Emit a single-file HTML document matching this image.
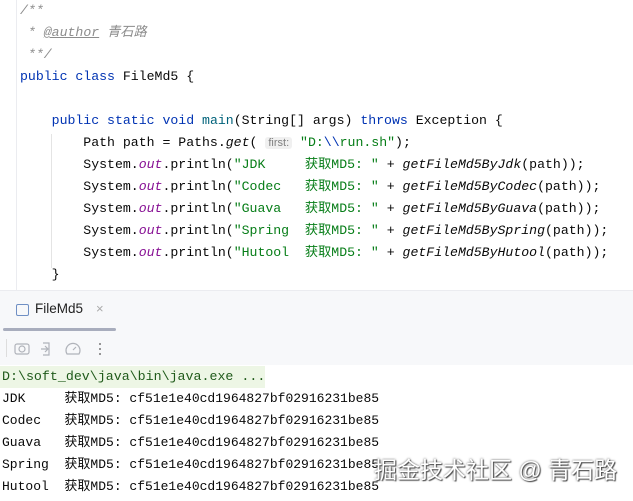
<!DOCTYPE html>
<html><head><meta charset="utf-8"><style>
body{margin:0;width:633px;height:501px;overflow:hidden;background:#fff;font-family:"Liberation Mono","Noto Sans CJK SC",monospace;}
.ed{position:absolute;left:0;top:0;width:633px;height:290px;background:#fff;}
.gl{position:absolute;left:16px;top:0;width:1px;height:290px;background:#ebecf0;}
.ig{position:absolute;left:51px;top:134px;width:1px;height:134px;background:#e4e4e4;}
.ln{position:absolute;left:20px;font-size:13.2px;line-height:22px;white-space:pre;color:#080808;}
.c{color:#8c8c8c;font-style:italic}
.k{color:#0033b3}
.s{color:#067d17}
.f{color:#871094;font-style:italic}
.i{font-style:italic}
.m{color:#00627a}
.hint{font-family:"Liberation Sans",sans-serif;font-size:11px;color:#808080;background:#f0f0f0;border-radius:3px;padding:0 3px;font-style:normal}
.cj{font-family:"Liberation Mono","Noto Sans CJK SC",monospace}
.tabs{position:absolute;left:0;top:290px;width:633px;height:41px;background:#f7f8fa;border-top:1px solid #ebecf0;border-bottom:1px solid #ebecf0;}
.tb{position:absolute;left:0;top:331px;width:633px;height:34px;background:#f7f8fa;}
.con{position:absolute;left:2px;font-size:13px;line-height:22px;white-space:pre;color:#080808}
</style></head><body>
<div class="ed">
<div class="gl"></div><div class="ig"></div>
<div class="ln c" style="top:0px">/**</div>
<div class="ln c" style="top:22px"> * <u>@author</u> <span class="cj">青石路</span></div>
<div class="ln c" style="top:44px"> **/</div>
<div class="ln" style="top:66px"><span class="k">public class</span> FileMd5 {</div>
<div class="ln" style="top:110px">    <span class="k">public static void</span> <span class="m">main</span>(String[] args) <span class="k">throws</span> Exception {</div>
<div class="ln" style="top:132px">        Path path = Paths.<span class="i">get</span>( <span class="hint">first:</span> <span class="s">"D:<span class="k">\\</span>run.sh"</span>);</div>
<div class="ln" style="top:154px">        System.<span class="f">out</span>.println(<span class="s">"JDK     获取MD5: "</span> + <span class="i">getFileMd5ByJdk</span>(path));</div>
<div class="ln" style="top:176px">        System.<span class="f">out</span>.println(<span class="s">"Codec   获取MD5: "</span> + <span class="i">getFileMd5ByCodec</span>(path));</div>
<div class="ln" style="top:198px">        System.<span class="f">out</span>.println(<span class="s">"Guava   获取MD5: "</span> + <span class="i">getFileMd5ByGuava</span>(path));</div>
<div class="ln" style="top:220px">        System.<span class="f">out</span>.println(<span class="s">"Spring  获取MD5: "</span> + <span class="i">getFileMd5BySpring</span>(path));</div>
<div class="ln" style="top:242px">        System.<span class="f">out</span>.println(<span class="s">"Hutool  获取MD5: "</span> + <span class="i">getFileMd5ByHutool</span>(path));</div>
<div class="ln" style="top:264px">    }</div>
</div>
<div class="tabs">
<div style="position:absolute;left:16px;top:13px;width:11px;height:10px;border:1px solid #6f8fc4;border-radius:2px"></div>
<div style="position:absolute;left:35px;top:10px;font-family:'Liberation Sans',sans-serif;font-size:13.5px;color:#222">FileMd5</div>
<div style="position:absolute;left:96px;top:10px;font-family:'Liberation Sans',sans-serif;font-size:13px;color:#aaa">×</div>
<div style="position:absolute;left:3px;top:37px;width:113px;height:3px;background:#a8adbd;border-radius:2px"></div>
</div>
<div class="tb">
<div style="position:absolute;left:6px;top:8px;width:1px;height:18px;background:#ddd"></div>
<svg style="position:absolute;left:14px;top:9px" width="110" height="18" fill="none" stroke="#b0b3ba" stroke-width="1.2">
<rect x="1" y="4" width="14" height="10" rx="2"/><circle cx="8" cy="9" r="3"/>
<path d="M29 3h6v12h-6M27 9h6M31 6l3 3-3 3"/>
<path d="M53 14a7 7 0 1 1 12 0zM59 10l3-3"/>
<circle cx="86" cy="4" r="1" fill="#777" stroke="none"/><circle cx="86" cy="9" r="1" fill="#777" stroke="none"/><circle cx="86" cy="14" r="1" fill="#777" stroke="none"/>
</svg>
</div>
<div style="position:absolute;left:0;top:366px;width:265px;height:22px;background:#edf6e5"></div>
<div class="con" style="top:366px;color:#1f5a1a;font-size:13.3px">D:\soft_dev\java\bin\java.exe ...</div>
<div class="con" style="top:388px">JDK     获取MD5: cf51e1e40cd1964827bf02916231be85</div>
<div class="con" style="top:410px">Codec   获取MD5: cf51e1e40cd1964827bf02916231be85</div>
<div class="con" style="top:432px">Guava   获取MD5: cf51e1e40cd1964827bf02916231be85</div>
<div class="con" style="top:454px">Spring  获取MD5: cf51e1e40cd1964827bf02916231be85</div>
<div class="con" style="top:476px">Hutool  获取MD5: cf51e1e40cd1964827bf02916231be85</div>
<div style="position:absolute;left:374px;top:451px;font-family:'Liberation Sans','Noto Sans CJK SC',sans-serif;font-size:23px;color:#fff;text-shadow:0 0 2px #555,1px 1px 1px #444;white-space:nowrap">掘金技术社区 @ 青石路</div>
</body></html>
